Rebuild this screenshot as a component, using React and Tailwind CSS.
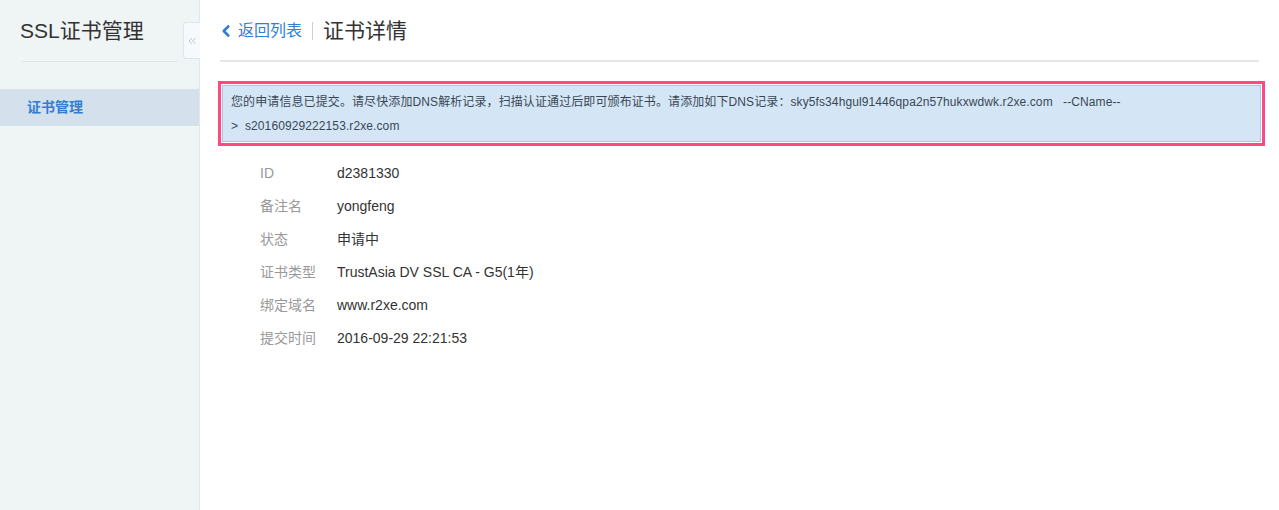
import { ChevronLeft, ChevronsLeft } from "lucide-react";

const fields = [
  ["ID", "d2381330"],
  ["备注名", "yongfeng"],
  ["状态", "申请中"],
  ["证书类型", "TrustAsia DV SSL CA - G5(1年)"],
  ["绑定域名", "www.r2xe.com"],
  ["提交时间", "2016-09-29 22:21:53"],
];

export default function App() {
  const font = { fontFamily: '"Liberation Sans", "Noto Sans CJK SC", sans-serif' };

  return (
    <div className="flex h-[510px] w-full bg-white text-[#333]" style={font}>
      {/* Sidebar */}
      <aside className="relative w-[200px] shrink-0 border-r border-[#e1e8ec] bg-[#eff4f5]">
        <div className="mx-[22px] flex h-[62px] items-center border-b border-[#dde5ea]">
          <h1 className="-ml-[2px] text-[21px] leading-[30px] text-[#333]">SSL证书管理</h1>
        </div>
        <nav className="mt-[27px]">
          <a className="flex h-[37px] items-center bg-[#d4e1ec] pl-[27px] text-[14px] font-bold text-[#2f7fd3]">
            证书管理
          </a>
        </nav>
        {/* collapse tab */}
        <button className="absolute right-[-1px] top-[22px] flex h-[37px] w-[17px] items-center justify-center rounded-l-[3px] border border-r-0 border-[#dbe6ee] bg-[#f7fafc] text-[#b5c3ce]">
          <ChevronsLeft size={12} strokeWidth={2} />
        </button>
      </aside>

      {/* Main */}
      <main className="flex-1 px-[20px]">
        <div className="flex h-[62px] items-center border-b-2 border-[#e6e6e6] pt-[1px]">
          <a className="flex items-center text-[#2f7fd3]">
            <ChevronLeft size={18} strokeWidth={3.5} className="-ml-[3px] mr-[3px]" />
            <span className="text-[16px]">返回列表</span>
          </a>
          <span className="mx-[10px] h-[18px] w-px bg-[#cfcfcf]" />
          <span className="text-[21px] text-[#333]">证书详情</span>
        </div>

        <div className="-ml-[2px] -mr-[6px] mt-[19px] border-[3px] border-[#ff4a80] bg-white p-px">
          <div className="h-[57px] border border-[#a9c8e6] bg-[#d4e6f5] px-[8px] pt-[4px] text-[12px] leading-[24px] tracking-[0.1px] text-[#3a4656]">
            您的申请信息已提交。请尽快添加DNS解析记录，扫描认证通过后即可颁布证书。请添加如下DNS记录：sky5fs34hgul91446qpa2n57hukxwdwk.r2xe.com&nbsp;&nbsp;&nbsp;--CName--
            <br />
            &gt;&nbsp;&nbsp;s20160929222153.r2xe.com
          </div>
        </div>

        <dl className="mt-[11px] pl-[40px] text-[14px]">
          {fields.map(([k, v]) => (
            <div key={k} className="flex h-[33px] items-center">
              <dt className="w-[77px] text-[#999]">{k}</dt>
              <dd className="text-[#333]">{v}</dd>
            </div>
          ))}
        </dl>
      </main>
    </div>
  );
}
